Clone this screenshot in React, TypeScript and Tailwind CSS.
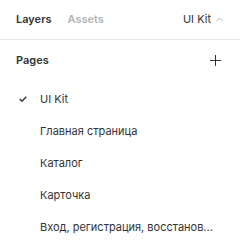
import React from "react";

const pages = ["UI Kit", "Главная страница", "Каталог", "Карточка", "Вход, регистрация, восстанов..."];

export default function App() {
  return (
    <div className="w-[240px] h-[248px] bg-white text-[11px] text-[#333333] overflow-hidden" style={{ fontFamily: "Inter, 'Noto Sans', sans-serif" }}>
      <div className="h-[40px] flex items-center pl-4 pr-[17px] border-b border-[#e6e6e6]">
        <span className="font-semibold text-[#333333]">Layers</span>
        <span className="font-semibold text-[#b3b3b3] ml-4">Assets</span>
        <div className="ml-auto flex items-center gap-[5px] text-[#333333]">
          <span>UI Kit</span>
          <svg width="7" height="5" viewBox="0 0 7 5" fill="none">
            <path d="M0.5 4L3.5 1L6.5 4" stroke="#b3b3b3" strokeWidth="1" />
          </svg>
        </div>
      </div>
      <div className="h-[40px] flex items-center pl-4 pr-[19px]">
        <span className="font-semibold">Pages</span>
        <svg className="ml-auto" width="11" height="11" viewBox="0 0 11 11" fill="none">
          <path d="M5.5 0V11M0 5.5H11" stroke="#333333" strokeWidth="1" />
        </svg>
      </div>
      <div className="pt-[3px] flex flex-col">
        {pages.map((p, i) => (
          <div key={p} className="h-[32px] flex items-center pr-[16px]">
            <div className="w-[40px] flex items-center justify-center shrink-0 pl-[6px]">
              {i === 0 && (
                <svg width="8" height="6" viewBox="0 0 8 6" fill="none">
                  <path d="M0.7 3L3 5.2L7.3 0.8" stroke="#333333" strokeWidth="1.4" />
                </svg>
              )}
            </div>
            <span className="whitespace-nowrap">{p}</span>
          </div>
        ))}
      </div>
    </div>
  );
}
